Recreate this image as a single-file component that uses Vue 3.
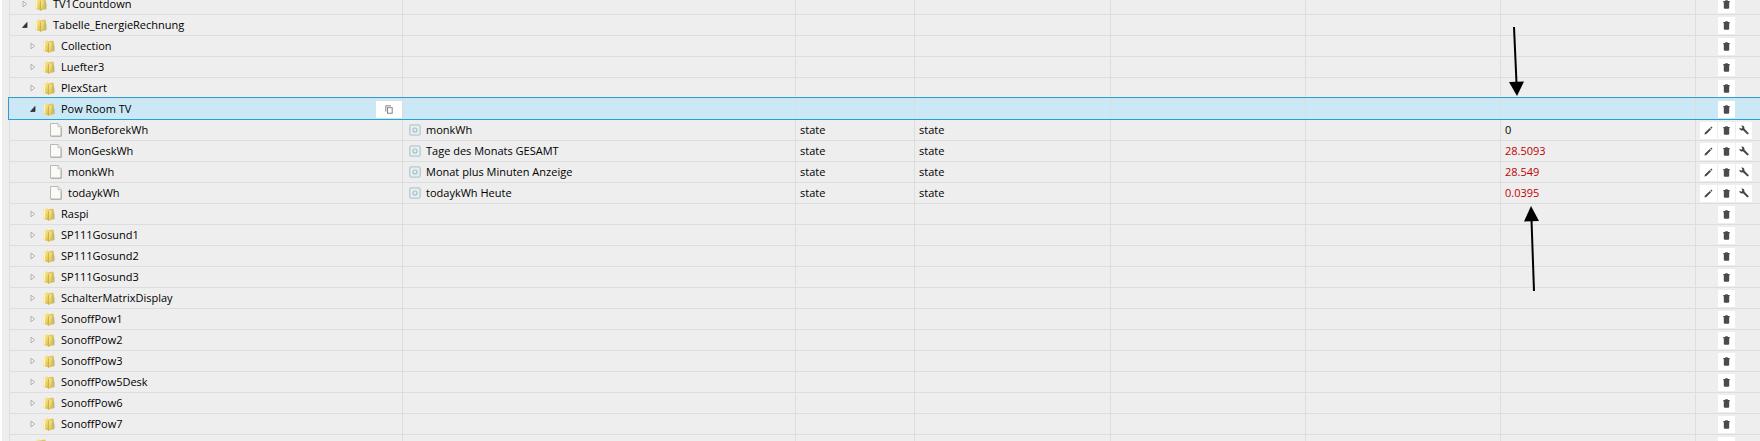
<script setup>
const folder = (name, level = 2, extra = {}) => ({ name, level, kind: 'folder', ...extra })
const state = (name, desc, value, changed = true) => ({
  name, desc, value, changed, level: 3, kind: 'state', type: 'state', role: 'state',
})

const rows = [
  folder('TV1Countdown', 1),
  folder('Tabelle_EnergieRechnung', 1, { open: true }),
  folder('Collection'),
  folder('Luefter3'),
  folder('PlexStart'),
  folder('Pow Room TV', 2, { open: true, selected: true }),
  state('MonBeforekWh', 'monkWh', '0', false),
  state('MonGeskWh', 'Tage des Monats GESAMT', '28.5093'),
  state('monkWh', 'Monat plus Minuten Anzeige', '28.549'),
  state('todaykWh', 'todaykWh Heute', '0.0395'),
  folder('Raspi'),
  folder('SP111Gosund1'),
  folder('SP111Gosund2'),
  folder('SP111Gosund3'),
  folder('SchalterMatrixDisplay'),
  folder('SonoffPow1'),
  folder('SonoffPow2'),
  folder('SonoffPow3'),
  folder('SonoffPow5Desk'),
  folder('SonoffPow6'),
  folder('SonoffPow7'),
  folder('', 1),
]
</script>

<template>
  <main class="panel">
    <svg class="defs" width="0" height="0" aria-hidden="true">
      <defs>
        <linearGradient id="gold" x1="0" y1="0" x2="1" y2="1">
          <stop offset="0" stop-color="#fbf0b0" />
          <stop offset="0.5" stop-color="#eed873" />
          <stop offset="1" stop-color="#cfae3c" />
        </linearGradient>
      </defs>
    </svg>
    <table class="tree">
      <colgroup>
        <col class="c-name"><col><col class="c-type"><col class="c-role">
        <col class="c-mid"><col class="c-mid"><col class="c-mid"><col class="c-act">
      </colgroup>
      <tbody>
        <tr v-for="(row, i) in rows" :key="i" :class="{ selected: row.selected }">
          <td>
            <div class="name" :class="'level-' + row.level">
              <button v-if="row.kind === 'folder'" class="expander" type="button" :aria-label="row.open ? 'Collapse' : 'Expand'">
                <svg width="6" height="8" viewBox="0 0 6 8">
                  <path v-if="row.open" d="M5 1.5V6.5H0.5Z" fill="#333" stroke="#333" stroke-width=".8" />
                  <path v-else d="M1 1.2L4.6 4L1 6.8Z" fill="#f6f6f6" stroke="#a8a8a8" stroke-width=".9" />
                </svg>
              </button>
              <svg v-if="row.kind === 'folder'" class="folder" width="12" height="13" viewBox="0 0 12 13">
                <path d="M5 1.5L10 .5L11 2V11L6 12.5Z" fill="#e0c65c" />
                <path d="M9.6 3L11.5 6V11L9.6 11.5Z" fill="#b9b878" />
                <path d="M.5 1.5L4.5 .3L6.2 1.8V12.5L.5 11Z" fill="url(#gold)" />
                <path d="M5.6 3L8.8 2V11.2L5.6 12.6Z" fill="url(#gold)" />
                <path d="M5.6 3V12.6" stroke="#c5a43b" stroke-width=".8" />
                <path d="M1.5 2.5V10.5" stroke="#fdf6c8" stroke-width="1" />
              </svg>
              <svg v-else class="file" width="12" height="14" viewBox="0 0 12 14">
                <path d="M.5 .5H8L11.2 3.8V13.2H.5Z" fill="#fafaf7" stroke="#b9bab6" />
                <path d="M8 .5V3.8H11.2" fill="#e6e7e3" stroke="#b9bab6" stroke-width=".8" />
                <path d="M1 13.2H11.2V5" fill="none" stroke="#9fa09c" stroke-width=".7" />
              </svg>
              <span class="label">{{ row.name }}</span>
              <button v-if="row.selected" class="copy" type="button" aria-label="Copy">
                <svg width="8" height="9" viewBox="0 0 8 9" fill="none" stroke="#777" stroke-width=".9">
                  <path d="M.8 6.5V.8H6" /><rect x="2.5" y="2.7" width="4.7" height="5.5" />
                </svg>
              </button>
            </div>
          </td>
          <td>
            <div v-if="row.desc" class="desc">
              <svg width="12" height="12" viewBox="0 0 12 12" fill="none" stroke="#b4cbd0">
                <rect x=".8" y=".8" width="10.4" height="10.4" rx="1.5" fill="#e6eeef" stroke-width="1.3" />
                <circle cx="6" cy="6" r="2" stroke="#a5bfc5" stroke-width="1.1" />
              </svg>
              <span>{{ row.desc }}</span>
            </div>
          </td>
          <td>{{ row.type }}</td>
          <td>{{ row.role }}</td>
          <td></td>
          <td></td>
          <td :class="{ changed: row.changed }">{{ row.value }}</td>
          <td>
            <div class="actions">
              <button v-if="row.kind === 'state'" type="button" aria-label="Edit">
                <svg width="9" height="9" viewBox="0 0 9 9" fill="#444">
                  <path d="M.4 8.6L1 6.5L5.8 1.9L7.1 3.2L2.4 8ZM6.3 1.4L7.2 .5L8.5 1.8L7.6 2.7Z" />
                </svg>
              </button>
              <button class="trash" type="button" aria-label="Delete">
                <svg width="7" height="9" viewBox="0 0 7 9" fill="#4a4a4f">
                  <path d="M.3 1H2.2V.2H4.8V1H6.7V2.2H6.2V8L5.5 8.8H1.5L.8 8V2.2H.3Z" />
                </svg>
              </button>
              <button v-if="row.kind === 'state'" class="wrench" type="button" aria-label="Settings">
                <svg width="10" height="10" viewBox="0 0 10 10">
                  <path d="M4.5 4.3L8.6 8.4" stroke="#444" stroke-width="2" stroke-linecap="round" />
                  <path d="M2.3 .5C4 0 5.8 1.4 5.4 3.5C5.2 5 3.7 5.8 2.3 5.4C1.1 5 .3 4 .4 2.7L2.4 3.7L3.5 2.4Z" fill="#444" />
                </svg>
              </button>
            </div>
          </td>
        </tr>
      </tbody>
    </table>
    <svg class="pointer first" width="18" height="72" viewBox="0 0 18 72" aria-hidden="true">
      <path d="M7 2L9.5 58" stroke="#000" stroke-width="2" /><path d="M2 57L17 56.5L10 71Z" />
    </svg>
    <svg class="pointer second" width="18" height="86" viewBox="0 0 18 86" aria-hidden="true">
      <path d="M12 85L9.5 14" stroke="#000" stroke-width="2" /><path d="M2 15.5L17 15L9 0Z" />
    </svg>
  </main>
</template>

<style>
body { background: #fff; }
</style>

<style scoped>
.panel {
  position: relative;
  height: 100vh;
  margin-left: 2px;
  padding-left: 7px;
  box-sizing: border-box;
  overflow: hidden;
  background: #eee;
  color: #000;
  font: 11px/20px "Open Sans", "Noto Sans", sans-serif;
}
.defs { position: absolute; }
.tree {
  width: 100%;
  margin-top: -7px;
  table-layout: fixed;
  border-collapse: separate;
  border-spacing: 0;
}
.c-name { width: 393px; }
.c-type { width: 119px; }
.c-role { width: 196px; }
.c-mid { width: 195px; }
.c-act { width: 65px; }
td {
  height: 20px;
  padding: 0 0 0 4px;
  border-top: 1px solid #ddd;
  border-left: 1px solid #ddd;
  white-space: nowrap;
}
td:first-child { padding-left: 0; }
.selected { background: #cbe8f6; outline: 1px solid #26a0da; }
.changed { color: #c00000; }
svg { display: block; flex: none; }
button {
  display: flex;
  align-items: center;
  justify-content: center;
  padding: 0;
  border: 0;
  background: #fff;
}
.name { display: flex; align-items: center; height: 20px; }
.level-1 { padding-left: 12px; }
.level-2 { padding-left: 20px; }
.level-3 { padding-left: 40px; }
.expander { width: 6px; height: 20px; margin-right: 7px; background: none; }
.label { margin-left: 6px; }
.copy { width: 26px; height: 17px; margin-left: auto; }
.desc { display: flex; align-items: center; gap: 5px; height: 20px; padding-left: 2px; }
.actions { display: grid; grid-template-columns: 17px 17px 16px; gap: 1px; }
.actions button { height: 17px; }
.trash { grid-column: 2; }
.pointer { position: absolute; }
.first { top: 25px; right: 235px; }
.second { top: 206px; right: 220px; }
</style>
